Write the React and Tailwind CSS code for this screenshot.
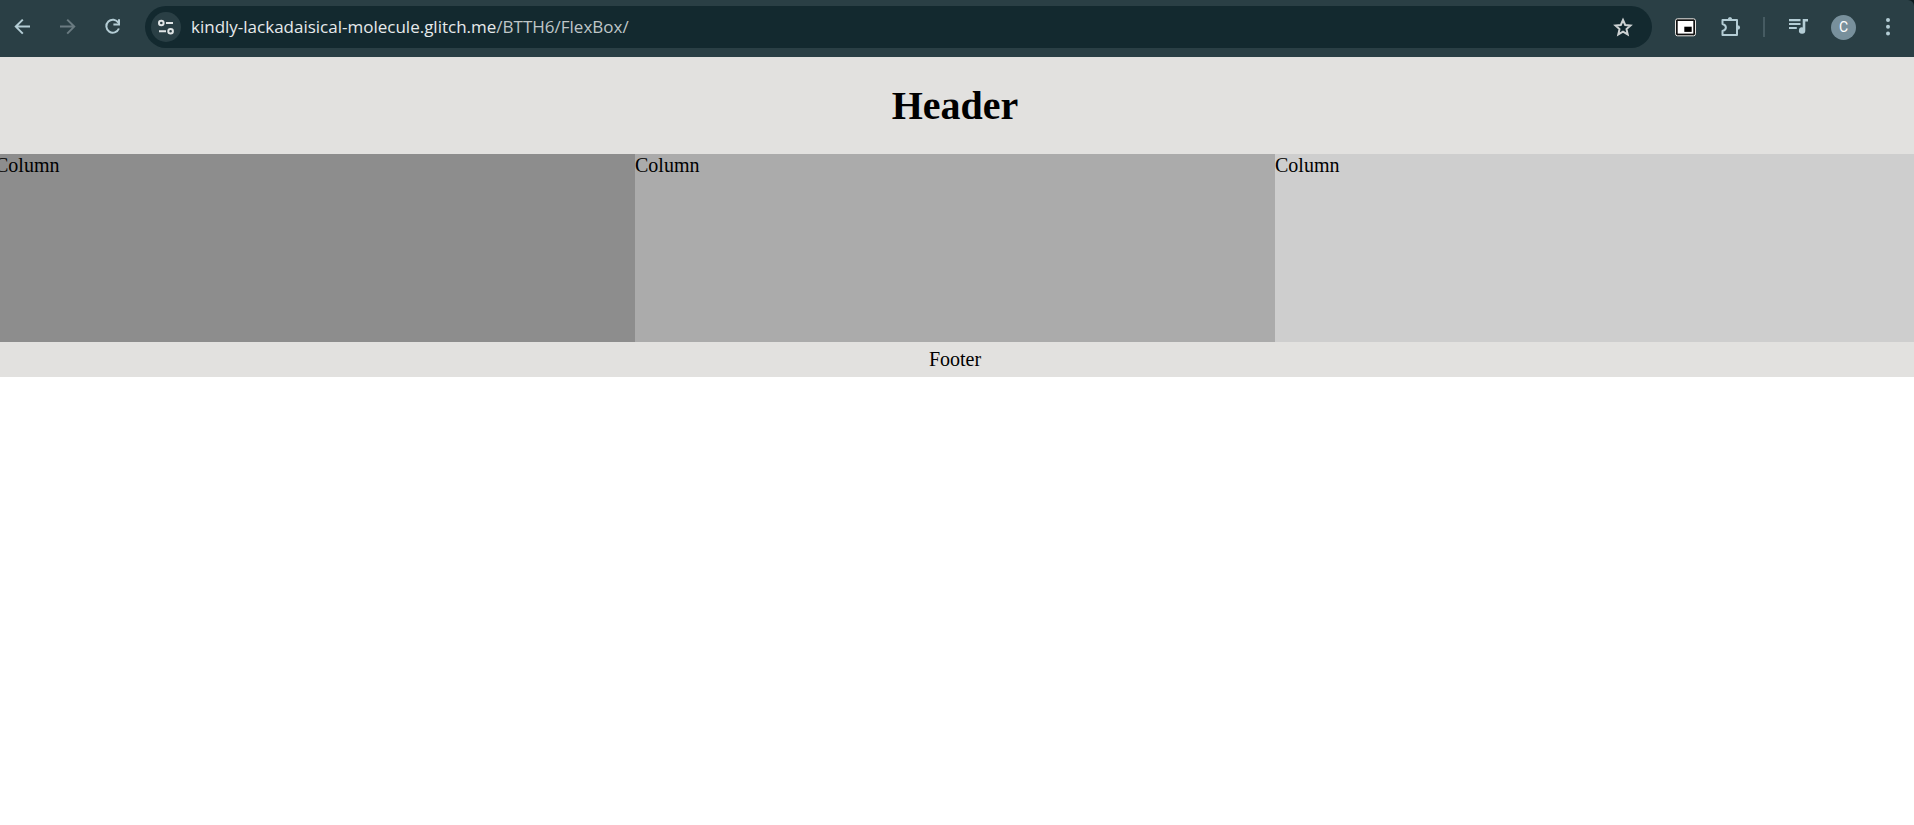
const columns = ["bg-[#8d8d8d]", "bg-[#ababab]", "bg-[#cecece]"];

function Icon({ children, className = "" }) {
  return (
    <svg viewBox="0 0 24 24" aria-hidden="true" className={`size-6 shrink-0 ${className}`}>
      {children}
    </svg>
  );
}

function IconButton({ label, children, className = "" }) {
  return (
    <button type="button" aria-label={label} className={`flex size-6 shrink-0 items-center justify-center ${className}`}>
      {children}
    </button>
  );
}

function BrowserBar() {
  return (
    <div className="bg-[#0c1a1e]">
      <div className="flex h-[57px] items-center rounded-tr-md bg-[#2a3f45] pr-[14px] pb-[3px] pl-[11px] text-[#b4cdd5]">
        <div className="flex gap-[21px]">
          <IconButton label="Back">
            <Icon className="fill-none stroke-current stroke-2">
              <path d="M19 11.600H5.500M11.800 4.600l-7 7 7 7" />
            </Icon>
          </IconButton>
          <IconButton label="Forward" className="text-[#6a7b81]">
            <Icon className="fill-none stroke-current stroke-2">
              <path d="M4 11.600h13.500M11.200 4.600l7 7-7 7" />
            </Icon>
          </IconButton>
          <IconButton label="Reload">
            <Icon className="fill-none stroke-current stroke-2">
              <path d="M17.400 7.800A6.500 6.500 0 1 0 17.900 13.500M18 4.200v5.300h-5.600" />
            </Icon>
          </IconButton>
        </div>
        <div className="ml-5 flex h-[42px] min-w-0 flex-1 items-center rounded-full bg-[#13292f] pr-[17px] pl-[6px]">
          <button type="button" aria-label="View site information" className="flex size-[30px] shrink-0 items-center justify-center rounded-full bg-[#2a3f45] text-[#e1e5e6]">
            <Icon className="fill-none stroke-current stroke-2">
              <circle cx="7.300" cy="8" r="2.300" />
              <path d="M12 8h7M5 16.300h7" />
              <circle cx="16.600" cy="16.300" r="2.300" />
            </Icon>
          </button>
          <a href="#address" className="ml-[10px] flex-1 truncate font-['Open_Sans','Noto_Sans',sans-serif] text-[17px] leading-6 text-[#e6eaeb]">
            kindly-lackadaisical-molecule.glitch.me<span className="text-[#bfc6c8]">/BTTH6/FlexBox/</span>
          </a>
          <IconButton label="Bookmark this page" className="text-[#cdd2d3]">
            <Icon className="fill-none stroke-current stroke-2">
              <path d="M12 5l2.200 5 5.300.5-4 3.600 1.200 5.300-4.700-2.800-4.700 2.800 1.200-5.300-4-3.600 5.300-.5z" />
            </Icon>
          </IconButton>
        </div>
        <div className="ml-[22px] flex items-center">
          <IconButton label="Picture in picture">
            <Icon>
              <rect x="1.500" y="3.800" width="20" height="17" rx="2" fill="#111" stroke="#e8e6e3" />
              <rect x="3.700" y="6" width="15.600" height="12.600" fill="#fff" />
              <rect x="10.300" y="11.700" width="7.400" height="5.200" fill="#000" />
            </Icon>
          </IconButton>
          <IconButton label="Extensions" className="ml-[21px]">
            <Icon className="fill-none stroke-current stroke-2">
              <path d="M3.500 5H18v15H3.500v-4c4.500-1.500 4.500-5.500 0-7z" strokeLinejoin="round" />
              <path d="M8.800 4.500a2.200 2.600 0 0 1 4.400 0zM18.500 10.300a2.600 2.200 0 0 1 0 4.400z" fill="currentColor" stroke="none" />
            </Icon>
          </IconButton>
          <span className="mr-[22px] ml-5 h-5 w-0.5 bg-[#465b62]" />
          <IconButton label="Media controls">
            <Icon className="fill-current">
              <path d="M2 4h11.500v2.200H2zM2 7.900h11.500v2.200H2zM2 11.900h7.800v2.200H2zM15.700 4H21v2.500h-2.700v9a3.200 3.200 0 1 1-2.600-3.100z" />
            </Icon>
          </IconButton>
          <button type="button" aria-label="Profile" className="ml-5 flex size-[25px] items-center justify-center rounded-full bg-[#78909c] font-[Roboto,sans-serif] text-[14px] text-white">
            C
          </button>
          <IconButton label="Menu" className="ml-5">
            <Icon className="fill-current">
              <circle cx="12" cy="5" r="2" />
              <circle cx="12" cy="11.800" r="2" />
              <circle cx="12" cy="18.600" r="2" />
            </Icon>
          </IconButton>
        </div>
      </div>
    </div>
  );
}

export default function App() {
  return (
    <div className="min-h-screen overflow-x-hidden bg-white">
      <BrowserBar />
      <div className="-mr-px -ml-[5px] font-['Liberation_Serif',serif] text-[20px] leading-[23px] text-black">
        <header className="bg-[#e2e1df] py-[25px] text-center">
          <h1 className="text-[40px] leading-[47px] font-bold">Header</h1>
        </header>
        <main className="grid h-[188px] grid-cols-3">
          {columns.map((color) => (
            <section key={color} className={color}>
              Column
            </section>
          ))}
        </main>
        <footer className="bg-[#e2e1df] py-[6px] text-center">Footer</footer>
      </div>
    </div>
  );
}
